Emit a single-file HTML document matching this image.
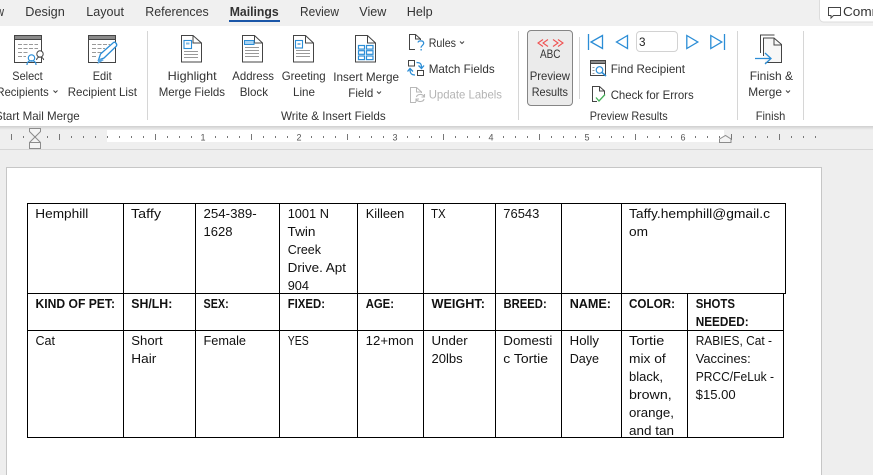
<!DOCTYPE html>
<html lang="en">
<head>
<meta charset="utf-8">
<title>Mailings</title>
<style>
html,body{margin:0;padding:0;width:873px;height:475px;overflow:hidden;background:#eee}
svg{display:block;position:absolute;left:0;top:0}
text{white-space:pre}
.t{font:12px "Liberation Sans",sans-serif;fill:#333}
.h{font:13px "Liberation Sans",sans-serif;fill:#333}
.g{font:12px "Liberation Sans",sans-serif;fill:#b4b4b4}
.d{font:13px "Liberation Sans",sans-serif;fill:#111}
.b{font:bold 13px "Liberation Sans",sans-serif;fill:#111}
.r{font:9px "Liberation Sans",sans-serif;fill:#555}
.i{fill:none;stroke:#444;stroke-width:1}
.l{fill:none;stroke:#999;stroke-width:1}
.u{fill:none;stroke:#2b8dd6;stroke-width:1.2}
.c{fill:none;stroke:#444;stroke-width:1}
</style>
</head>
<body>
<svg width="873" height="475" viewBox="0 0 873 475" xmlns="http://www.w3.org/2000/svg">
<defs>
<pattern id="dots" x="11" y="136" width="12" height="2" patternUnits="userSpaceOnUse"><rect x="0" y="0" width="1" height="2" fill="#777"/></pattern>
<linearGradient id="sh" x1="0" y1="0" x2="0" y2="1"><stop offset="0" stop-color="#cfcfcf"/><stop offset="1" stop-color="#efefef"/></linearGradient>
</defs>

<!-- backgrounds -->
<rect x="0" y="0" width="873" height="26" fill="#f0f0f0"/>
<rect x="0" y="26" width="873" height="100" fill="#fff"/>
<rect x="0" y="126" width="873" height="24" fill="#efefef"/>
<rect x="0" y="126" width="873" height="4" fill="url(#sh)"/>
<rect x="0" y="149" width="873" height="1" fill="#d6d6d6"/>
<rect x="0" y="150" width="873" height="325" fill="#eee"/>

<!-- tabs -->
<text class="h" x="-4" y="16" textLength="8" lengthAdjust="spacingAndGlyphs">w</text>
<text class="h" x="25.3" y="16" textLength="39.5" lengthAdjust="spacingAndGlyphs">Design</text>
<text class="h" x="86.3" y="16" textLength="37.7" lengthAdjust="spacingAndGlyphs">Layout</text>
<text class="h" x="145.3" y="16" textLength="63.4" lengthAdjust="spacingAndGlyphs">References</text>
<text class="h" x="229.7" y="16" textLength="49" lengthAdjust="spacingAndGlyphs" style="font-weight:bold;fill:#333">Mailings</text>
<rect x="229" y="20" width="51" height="2" fill="#1a56a8"/>
<text class="h" x="300" y="16" textLength="39" lengthAdjust="spacingAndGlyphs">Review</text>
<text class="h" x="359.3" y="16" textLength="27" lengthAdjust="spacingAndGlyphs">View</text>
<text class="h" x="406.7" y="16" textLength="26" lengthAdjust="spacingAndGlyphs">Help</text>

<!-- comments button -->
<rect x="819.5" y="-3" width="70" height="25" rx="4" fill="#fff" stroke="#dcdcdc"/>
<path class="i" d="M828.5 7.5h12v8h-7l-2.500 2.500v-2.500h-2.500z"/>
<text class="h" x="843" y="16" textLength="40" lengthAdjust="spacingAndGlyphs">Comm</text>

<!-- separators -->
<g fill="#d6d6d6">
<rect x="147" y="31" width="1" height="89"/>
<rect x="518" y="31" width="1" height="89"/>
<rect x="579" y="37" width="1" height="62"/>
<rect x="737" y="31" width="1" height="89"/>
<rect x="803" y="31" width="1" height="89"/>
</g>

<!-- Select Recipients icon -->
<rect x="14.5" y="35.5" width="27" height="27" fill="#fff" stroke="#444"/>
<rect x="14.5" y="35.5" width="27" height="4" fill="#8a8a8a" stroke="#444"/>
<path class="l" stroke-dasharray="4 1.500" d="M18 44.500h20M18 48.500h20M18 52.500h10M18 56.500h8"/>
<circle cx="31.500" cy="58" r="3.200" fill="#fff" stroke="#2b8dd6" stroke-width="1.200"/>
<path class="u" d="M27 65c0-3 2-4.300 4.500-4.300s4.500 1.300 4.500 4.300"/>
<circle cx="40" cy="54" r="3.200" fill="#fff" stroke="#444"/>
<path class="i" d="M36.500 60c.5-2.500 2-3 3.500-3s3 .5 3.700 3"/>

<!-- Edit Recipient List icon -->
<rect x="88.500" y="35.500" width="27" height="27" fill="#fff" stroke="#444"/>
<rect x="88.500" y="35.500" width="27" height="4" fill="#8a8a8a" stroke="#444"/>
<path class="l" stroke-dasharray="4 1.500" d="M92 44.500h18M92 48.500h13M92 52.500h10M92 56.500h5"/>
<path d="M98.500 60l2-6 13-11.500c1.500-1 4 1.500 3 3.500l-12.500 12z" fill="#fff" stroke="#2b8dd6" stroke-width="1.300"/>
<path d="M97.500 64l1.500-6 5 2z" fill="#5aa6e0"/>

<!-- Highlight icon -->
<path class="i" d="M181.500 35.500h11.500l8.500 7.500v19h-20z"/>
<path class="i" d="M193 35.500v7.500h8.500"/>
<rect x="184" y="40.500" width="7.500" height="8" fill="none" stroke="#2b8dd6" stroke-width="1.100"/>
<rect x="186" y="42.500" width="3.500" height="2" fill="#2b8dd6" fill-opacity=".6"/>
<path class="l" d="M184 51.500h14M184 54.500h14M184 57.500h14"/>

<!-- Address icon -->
<path class="i" d="M242.500 35.500h12l8 7.500v19h-20z"/>
<path class="i" d="M254.500 35.500v7.500h8"/>
<rect x="244.500" y="40.500" width="9.500" height="4" fill="#a9d3f2" stroke="#2b8dd6"/>
<path class="l" d="M245 47.500h14M245 50.500h14M245 53.500h14M245 56.500h14"/>

<!-- Greeting icon -->
<path class="i" d="M293.500 35.500h12l8 7.500v19h-20z"/>
<path class="i" d="M305.500 35.500v7.500h8"/>
<rect x="295.500" y="40.500" width="7" height="7.500" fill="none" stroke="#2b8dd6" stroke-width="1.100"/>
<rect x="297.500" y="43" width="3" height="2" fill="#2b8dd6" fill-opacity=".6"/>
<path class="l" d="M296 50.500h14M296 53.500h14M296 56.500h14"/>

<!-- Insert Merge icon -->
<path class="i" d="M355.500 35.500h12l8 7.500v19h-20z"/>
<path class="i" d="M367.500 35.500v7.500h8"/>
<g fill="none" stroke="#2b8dd6" stroke-width="1.200">
<rect x="358.500" y="45.500" width="6" height="3.600"/><rect x="366.500" y="45.500" width="6.500" height="3.600"/>
<rect x="358.500" y="50.700" width="6" height="3.600"/><rect x="366.500" y="50.700" width="6.500" height="3.600"/>
<rect x="358.500" y="56" width="6" height="3.600"/><rect x="366.500" y="56" width="6.500" height="3.600"/>
</g>

<!-- Rules -->
<path class="i" d="M415 49.500h-5.500v-15h6l5 4.500v1"/>
<path class="i" d="M415.500 34.500v4.500h5.500"/>
<path fill="none" stroke="#2b8dd6" stroke-width="1.200" d="M418 42.500c.3-2 5.300-2.500 5.700.5.300 2-2.700 2.500-2.700 4.700"/>
<rect x="420.500" y="49" width="1.300" height="1.500" fill="#2b8dd6"/>

<!-- Match Fields -->
<rect x="408.500" y="60.500" width="6" height="5.500" class="i"/>
<rect x="417.500" y="70.500" width="6" height="5" class="i"/>
<path fill="none" stroke="#2b8dd6" stroke-width="1.300" d="M416.500 62.500c4 0 5 1.500 5 5M418.500 65.500l3 3 2.500-3M415 75c-3.500 0-5-1.500-5-5.500M407.500 71.500l2.500-3 3 3"/>

<!-- Update Labels -->
<path fill="none" stroke="#b8b8b8" d="M416 102.500h-5.500v-15h6l5 4.500v1M416.500 87.500v4.500h5.500"/>
<path fill="none" stroke="#b8b8b8" stroke-width="1.100" d="M416.500 97c.5-3 6-3.500 7.500-.5M424.500 94v3h-3M424 99c-.5 3-6 3.500-7.500.5M416 102v-3h3"/>

<!-- Ribbon labels -->
<text class="t" x="12.300" y="80" textLength="30.400" lengthAdjust="spacingAndGlyphs">Select</text>
<text class="t" x="-3.500" y="96" textLength="52.200" lengthAdjust="spacingAndGlyphs">Recipients</text>
<path class="c" d="M53.500 90.500l2 2 2-2"/>
<text class="t" x="92.700" y="80" textLength="19" lengthAdjust="spacingAndGlyphs">Edit</text>
<text class="t" x="67.700" y="96" textLength="69.300" lengthAdjust="spacingAndGlyphs">Recipient List</text>
<text class="t" x="-5" y="120" textLength="84.700" lengthAdjust="spacingAndGlyphs">Start Mail Merge</text>
<text class="t" x="167.700" y="80" textLength="49" lengthAdjust="spacingAndGlyphs">Highlight</text>
<text class="t" x="158.700" y="96" textLength="66.300" lengthAdjust="spacingAndGlyphs">Merge Fields</text>
<text class="t" x="232.300" y="80" textLength="41.700" lengthAdjust="spacingAndGlyphs">Address</text>
<text class="t" x="239.700" y="96" textLength="28.300" lengthAdjust="spacingAndGlyphs">Block</text>
<text class="t" x="281.700" y="80" textLength="44" lengthAdjust="spacingAndGlyphs">Greeting</text>
<text class="t" x="293" y="96" textLength="22" lengthAdjust="spacingAndGlyphs">Line</text>
<text class="t" x="333.300" y="81" textLength="65.700" lengthAdjust="spacingAndGlyphs">Insert Merge</text>
<text class="t" x="348.300" y="97" textLength="25" lengthAdjust="spacingAndGlyphs">Field</text>
<path class="c" d="M377 91.500l2 2 2-2"/>
<text class="t" x="281" y="120" textLength="104.700" lengthAdjust="spacingAndGlyphs">Write &amp; Insert Fields</text>
<text class="t" x="428.700" y="47" textLength="27.300" lengthAdjust="spacingAndGlyphs">Rules</text>
<path class="c" d="M460 41.500l2 2 2-2"/>
<text class="t" x="428.700" y="73" textLength="66" lengthAdjust="spacingAndGlyphs">Match Fields</text>
<text class="g" x="428.700" y="98.500" textLength="73.300" lengthAdjust="spacingAndGlyphs">Update Labels</text>

<!-- Preview Results button -->
<rect x="527.500" y="30.500" width="45" height="75" rx="3.500" fill="#ebebeb" stroke="#858585"/>
<path fill="none" stroke="#f05252" stroke-width="1.100" d="M543 39.500l-5 3.500 5 3.500M548 39.500l-5 3.500 5 3.500M553 39.500l5 3.500-5 3.500M558 39.500l5 3.500-5 3.500"/>
<text class="t" x="540" y="58" textLength="20.500" lengthAdjust="spacingAndGlyphs">ABC</text>
<text class="t" x="529.700" y="80" textLength="40.300" lengthAdjust="spacingAndGlyphs">Preview</text>
<text class="t" x="531.700" y="96" textLength="36.300" lengthAdjust="spacingAndGlyphs">Results</text>

<!-- Nav arrows -->
<g fill="none" stroke="#2b8dd6" stroke-width="1.300">
<path d="M588.500 34v16M602.500 35.500l-11.500 6.500 11.500 6.500z"/>
<path d="M627.500 35.500l-11 6.500 11 6.500z"/>
<path d="M686.800 35.500l11 6.500-11 6.500z"/>
<path d="M710.800 35.500l11 6.500-11 6.500zM724.500 34v16"/>
</g>
<rect x="636.500" y="31.500" width="41" height="20" rx="3.500" fill="#fff" stroke="#d2d2d2"/>
<text class="t" x="639" y="46" textLength="6.500" lengthAdjust="spacingAndGlyphs" style="fill:#222">3</text>

<!-- Find Recipient -->
<rect x="590.500" y="60.500" width="15" height="15" fill="#fff" stroke="#444"/>
<rect x="590.500" y="60.500" width="15" height="3" fill="#8a8a8a" stroke="#444"/>
<path class="l" stroke-dasharray="2 1" d="M592.500 67.500h3M592.500 70.500h3M592.500 73.500h3"/>
<circle cx="599.500" cy="70" r="3.300" fill="#fff" stroke="#2b8dd6" stroke-width="1.200"/>
<path d="M602 72.500l4 3.500" stroke="#2b8dd6" stroke-width="1.500"/>
<text class="t" x="610.700" y="73" textLength="74.300" lengthAdjust="spacingAndGlyphs">Find Recipient</text>

<!-- Check for Errors -->
<path class="i" d="M597 101.500h-4.500v-15h7l5 4.500v4"/>
<path class="i" d="M599.500 86.500v4.500h5"/>
<path fill="none" stroke="#45b058" stroke-width="1.300" d="M596 97.500l3 3.500 6-6.500"/>
<text class="t" x="610.700" y="99" textLength="83" lengthAdjust="spacingAndGlyphs">Check for Errors</text>
<text class="t" x="589.700" y="120" textLength="78" lengthAdjust="spacingAndGlyphs">Preview Results</text>

<!-- Finish icon -->
<path class="i" d="M760.500 53v-18h14"/>
<path fill="#f7f7f7" stroke="#444" d="M763.500 56v-18h10.500l7.500 6.500v18h-16"/>
<path class="i" d="M774 38v7h7.500"/>
<path fill="none" stroke="#2b8dd6" stroke-width="1.300" d="M755 58.500h15.500M765 53l6 5.500-6 5.500"/>
<text class="t" x="749.700" y="80" textLength="43.300" lengthAdjust="spacingAndGlyphs">Finish &amp;</text>
<text class="t" x="748.300" y="96" textLength="33.700" lengthAdjust="spacingAndGlyphs">Merge</text>
<path class="c" d="M786 90.500l2 2 2-2"/>
<text class="t" x="755.700" y="120" textLength="29.600" lengthAdjust="spacingAndGlyphs">Finish</text>

<!-- Ruler -->
<rect x="107" y="130" width="617" height="12" fill="#fff"/>
<rect x="11" y="136" width="805" height="2" fill="url(#dots)"/>
<g fill="#777">
<rect x="11" y="134" width="1" height="6"/><rect x="59" y="134" width="1" height="6"/>
<rect x="155" y="134" width="1" height="6"/><rect x="251" y="134" width="1" height="6"/>
<rect x="347" y="134" width="1" height="6"/><rect x="443" y="134" width="1" height="6"/>
<rect x="539" y="134" width="1" height="6"/><rect x="635" y="134" width="1" height="6"/>
<rect x="731" y="134" width="1" height="6"/><rect x="779" y="134" width="1" height="6"/>
</g>
<g fill="#fff">
<rect x="198" y="131" width="10" height="11"/><rect x="294" y="131" width="10" height="11"/>
<rect x="390" y="131" width="10" height="11"/><rect x="486" y="131" width="10" height="11"/>
<rect x="582" y="131" width="10" height="11"/><rect x="678" y="131" width="10" height="11"/>
</g>
<text class="r" x="200.500" y="140.500">1</text>
<text class="r" x="296.500" y="140.500">2</text>
<text class="r" x="392.500" y="140.500">3</text>
<text class="r" x="488.500" y="140.500">4</text>
<text class="r" x="584.500" y="140.500">5</text>
<text class="r" x="680.500" y="140.500">6</text>

<!-- Indent markers -->
<path fill="#f4f4f4" stroke="#8c8c8c" d="M29.500 128.500h11v3l-5.500 5.500-5.500-5.500zM35 137l5.500 5.500v6h-11v-6zM29.500 142.500h11"/>
<path fill="#f4f4f4" stroke="#8c8c8c" d="M719.500 142.500v-3.500l6-3.500 5.500 3.500v3.500z"/>

<!-- Page -->
<rect x="6.500" y="167.500" width="815" height="320" fill="#fff" stroke="#c6c6c6"/>

<!-- Table lines -->
<g fill="none" stroke="#000" stroke-width="1">
<path d="M27.500 203.500H785.500V293.500H27.500zM27.500 293.500V437.500H783.500V293.500M27.500 330.500H783.500"/>
<path d="M123.500 203.500V437.500M195.500 203.500V437.500M279.500 203.500V437.500M357.500 203.500V437.500M423.500 203.500V437.500M495.500 203.500V437.500M561.500 203.500V437.500M621.500 203.500V437.500M687.500 293.500V437.500"/>
</g>

<!-- Row 1 -->
<text class="d" x="35.300" y="218" textLength="53" lengthAdjust="spacingAndGlyphs">Hemphill</text>
<text class="d" x="131" y="218" textLength="30" lengthAdjust="spacingAndGlyphs">Taffy</text>
<text class="d" x="203.500" y="218" textLength="53.200" lengthAdjust="spacingAndGlyphs">254-389-</text>
<text class="d" x="203.500" y="236" textLength="29" lengthAdjust="spacingAndGlyphs">1628</text>
<text class="d" x="287.700" y="218" textLength="41.300" lengthAdjust="spacingAndGlyphs">1001 N</text>
<text class="d" x="287.500" y="236" textLength="28" lengthAdjust="spacingAndGlyphs">Twin</text>
<text class="d" x="287.700" y="254" textLength="33.300" lengthAdjust="spacingAndGlyphs">Creek</text>
<text class="d" x="287.700" y="272" textLength="58.300" lengthAdjust="spacingAndGlyphs">Drive. Apt</text>
<text class="d" x="287.700" y="290" textLength="21.300" lengthAdjust="spacingAndGlyphs">904</text>
<text class="d" x="365.700" y="218" textLength="38.600" lengthAdjust="spacingAndGlyphs">Killeen</text>
<text class="d" x="431" y="218" textLength="14.700" lengthAdjust="spacingAndGlyphs">TX</text>
<text class="d" x="503.300" y="218" textLength="36" lengthAdjust="spacingAndGlyphs">76543</text>
<text class="d" x="629" y="218" textLength="141" lengthAdjust="spacingAndGlyphs">Taffy.hemphill@gmail.c</text>
<text class="d" x="629" y="236" textLength="19" lengthAdjust="spacingAndGlyphs">om</text>

<!-- Row 2 -->
<text class="b" x="35.500" y="308" textLength="79.500" lengthAdjust="spacingAndGlyphs">KIND OF PET:</text>
<text class="b" x="131.300" y="308" textLength="41" lengthAdjust="spacingAndGlyphs">SH/LH:</text>
<text class="b" x="203.500" y="308" textLength="25.200" lengthAdjust="spacingAndGlyphs">SEX:</text>
<text class="b" x="287.700" y="308" textLength="37.300" lengthAdjust="spacingAndGlyphs">FIXED:</text>
<text class="b" x="365.700" y="308" textLength="28.300" lengthAdjust="spacingAndGlyphs">AGE:</text>
<text class="b" x="431.500" y="308" textLength="53.500" lengthAdjust="spacingAndGlyphs">WEIGHT:</text>
<text class="b" x="503.500" y="308" textLength="43.200" lengthAdjust="spacingAndGlyphs">BREED:</text>
<text class="b" x="569.700" y="308" textLength="41.300" lengthAdjust="spacingAndGlyphs">NAME:</text>
<text class="b" x="629" y="308" textLength="46" lengthAdjust="spacingAndGlyphs">COLOR:</text>
<text class="b" x="695.700" y="308" textLength="39.300" lengthAdjust="spacingAndGlyphs">SHOTS</text>
<text class="b" x="695.700" y="326" textLength="53" lengthAdjust="spacingAndGlyphs">NEEDED:</text>

<!-- Row 3 -->
<text class="d" x="35.500" y="345" textLength="19.500" lengthAdjust="spacingAndGlyphs">Cat</text>
<text class="d" x="131.300" y="345" textLength="31.400" lengthAdjust="spacingAndGlyphs">Short</text>
<text class="d" x="131.300" y="363" textLength="25" lengthAdjust="spacingAndGlyphs">Hair</text>
<text class="d" x="203.500" y="345" textLength="42.500" lengthAdjust="spacingAndGlyphs">Female</text>
<text class="d" x="287.700" y="345" textLength="21" lengthAdjust="spacingAndGlyphs">YES</text>
<text class="d" x="365.700" y="345" textLength="48" lengthAdjust="spacingAndGlyphs">12+mon</text>
<text class="d" x="431.500" y="345" textLength="36.200" lengthAdjust="spacingAndGlyphs">Under</text>
<text class="d" x="431.500" y="363" textLength="31.200" lengthAdjust="spacingAndGlyphs">20lbs</text>
<text class="d" x="503.300" y="345" textLength="49" lengthAdjust="spacingAndGlyphs">Domesti</text>
<text class="d" x="503.300" y="363" textLength="44.700" lengthAdjust="spacingAndGlyphs">c Tortie</text>
<text class="d" x="569.700" y="345" textLength="29.300" lengthAdjust="spacingAndGlyphs">Holly</text>
<text class="d" x="569.700" y="363" textLength="29.300" lengthAdjust="spacingAndGlyphs">Daye</text>
<text class="d" x="629" y="345" textLength="35.300" lengthAdjust="spacingAndGlyphs">Tortie</text>
<text class="d" x="629" y="363" textLength="36.700" lengthAdjust="spacingAndGlyphs">mix of</text>
<text class="d" x="629" y="381" textLength="34" lengthAdjust="spacingAndGlyphs">black,</text>
<text class="d" x="629" y="399" textLength="42.700" lengthAdjust="spacingAndGlyphs">brown,</text>
<text class="d" x="629" y="417" textLength="45" lengthAdjust="spacingAndGlyphs">orange,</text>
<text class="d" x="629" y="435" textLength="45" lengthAdjust="spacingAndGlyphs">and tan</text>
<text class="d" x="695.700" y="345" textLength="76.300" lengthAdjust="spacingAndGlyphs">RABIES, Cat -</text>
<text class="d" x="695.700" y="363" textLength="55" lengthAdjust="spacingAndGlyphs">Vaccines:</text>
<text class="d" x="695.700" y="381" textLength="78.300" lengthAdjust="spacingAndGlyphs">PRCC/FeLuk -</text>
<text class="d" x="695.700" y="399" textLength="40" lengthAdjust="spacingAndGlyphs">$15.00</text>
</svg>
</body>
</html>
